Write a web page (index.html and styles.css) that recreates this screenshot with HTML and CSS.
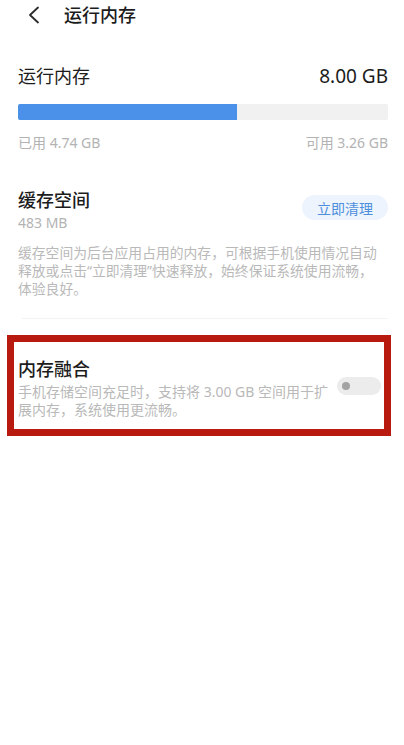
FILE: index.html
```html
<!DOCTYPE html>
<html lang="zh-CN">
<head>
    <meta charset="UTF-8">
    <meta name="viewport" content="width=device-width, initial-scale=1.0">
    <title>运行内存</title>
    <link rel="stylesheet" href="styles.css">
</head>
<body>
    <header class="topbar">
        <svg class="back" width="14" height="18" viewBox="0 0 14 18">
            <path d="M11 1.5 L3 9 L11 16.5" fill="none" stroke="#2a2a2a" stroke-width="1.8" stroke-linecap="round" stroke-linejoin="round"/>
        </svg>
        <h1>运行内存</h1>
    </header>
    <main class="page">
        <section class="memory">
            <div class="row">
                <span class="label">运行内存</span>
                <span class="total">8.00 GB</span>
            </div>
            <div class="bar">
                <div class="bar-used" style="width: 59.2%"></div>
            </div>
            <div class="row stats">
                <span>已用 4.74 GB</span>
                <span>可用 3.26 GB</span>
            </div>
        </section>

        <section class="cache">
            <div class="cache-row">
                <div>
                    <h2>缓存空间</h2>
                    <p class="size">483 MB</p>
                </div>
                <button class="clean">立即清理</button>
            </div>
            <p class="desc">缓存空间为后台应用占用的内存，可根据手机使用情况自动释放或点击“立即清理”快速释放，始终保证系统使用流畅，体验良好。</p>
        </section>

        <hr class="divider">

        <section class="merge">
            <div class="merge-text">
                <h2>内存融合</h2>
                <p class="desc">手机存储空间充足时，支持将 3.00 GB 空间用于扩展内存，系统使用更流畅。</p>
            </div>
            <span class="switch"><span class="knob"></span></span>
            <div class="highlight"></div>
        </section>
    </main>
</body>
</html>
```

FILE: styles.css
```css
body {
    margin: 0;
    background: #fff;
    color: #1c1c1c;
    font-family: "Noto Sans", "Noto Sans CJK SC", sans-serif;
}

.topbar {
    display: flex;
    align-items: center;
    height: 30px;
    padding-left: 27px;
}

.back {
    display: block;
}

.topbar h1 {
    margin: 0 0 0 23px;
    font-size: 18px;
    font-weight: 500;
    line-height: 24px;
}

.page {
    padding: 0 16px 0 18px;
}

.row {
    display: flex;
    justify-content: space-between;
    align-items: center;
}

.memory {
    margin-top: 34px;
}

.label {
    font-size: 18px;
    line-height: 24px;
}

.total {
    font-size: 19px;
    line-height: 24px;
}

.bar {
    height: 16px;
    margin-top: 16px;
    background: #f1f1f1;
    border-radius: 2px;
    overflow: hidden;
}

.bar-used {
    height: 100%;
    background: #4b91ea;
}

.stats {
    margin-top: 14px;
    font-size: 14px;
    line-height: 18px;
    color: #b3b3b3;
}

.cache {
    margin-top: 36px;
}

.cache-row {
    display: flex;
    justify-content: space-between;
    align-items: flex-start;
}

h2 {
    margin: 0;
    font-size: 18px;
    font-weight: 500;
    line-height: 24px;
}

.size {
    margin: 2px 0 0;
    font-size: 14px;
    line-height: 18px;
    color: #b3b3b3;
}

.clean {
    margin-top: 7px;
    height: 25px;
    padding: 0 15px;
    border: none;
    border-radius: 13px;
    background: #edf4fd;
    color: #4d8fdc;
    font-family: "Noto Sans CJK SC", sans-serif;
    font-size: 14px;
}

.desc {
    margin: 12px 6px 0 0;
    font-size: 13.8px;
    line-height: 18px;
    color: #b9b9b9;
}

.divider {
    margin: 20px 0 0 4px;
    border: none;
    border-top: 1px solid #f3f3f3;
}

.merge {
    position: relative;
    display: flex;
    align-items: flex-start;
    justify-content: space-between;
    margin-top: 16px;
    padding: 22px 0 17px;
}

.merge-text {
    width: 316px;
}

.merge .desc {
    margin: 2px 0 0;
    font-size: 14px;
}

.switch {
    position: relative;
    flex: none;
    width: 44px;
    height: 18px;
    margin: 20px 7px 0 0;
    border-radius: 9px;
    background: #ececec;
}

.knob {
    position: absolute;
    left: 5px;
    top: 5px;
    width: 8px;
    height: 8px;
    border-radius: 50%;
    background: #a3a3a3;
}

.highlight {
    position: absolute;
    top: 0;
    bottom: 0;
    left: -11px;
    right: -3px;
    border: 7px solid #b81a10;
}
```
